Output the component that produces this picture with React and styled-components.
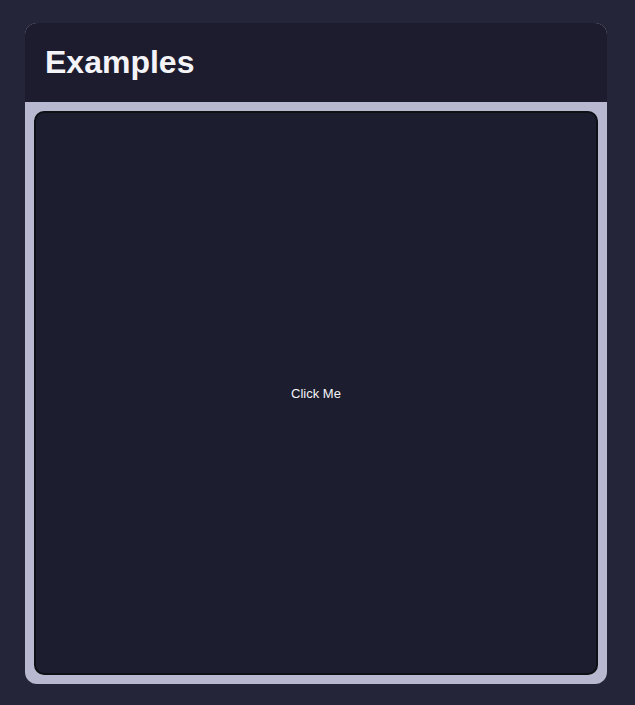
import React from "react";
import styled, { createGlobalStyle } from "styled-components";

const Global = createGlobalStyle`
  html, body { margin: 0; padding: 0; background: #25253a; }
  body { font-family: "Liberation Sans", Arial, sans-serif; }
`;

const Page = styled.div`
  padding: 23px 28px 21px 25px;
  min-height: 705px;
  box-sizing: border-box;
`;

const Card = styled.section`
  width: 582px;
  height: 661px;
  border-radius: 12px;
  overflow: hidden;
  display: flex;
  flex-direction: column;
  background: #b8b9d0;
`;

const Header = styled.header`
  height: 79px;
  flex: none;
  background: #1c1c2e;
  display: flex;
  align-items: center;
  padding: 0 20px;
  box-sizing: border-box;
`;

const Title = styled.h1`
  margin: 0;
  font-size: 32px;
  font-weight: 700;
  color: #f4f4f8;
`;

const Body = styled.div`
  flex: 1;
  padding: 9px;
  display: flex;
`;

const Stage = styled.div`
  flex: 1;
  background: #1c1d2e;
  border: 2px solid #0f0f16;
  border-radius: 10px;
  display: flex;
  align-items: center;
  justify-content: center;
`;

const Button = styled.button`
  background: none;
  border: none;
  color: #f4f4f8;
  font-family: "Liberation Sans", Arial, sans-serif;
  font-size: 13px;
  cursor: pointer;
  padding: 0;
`;

export default function App() {
  return (
    <>
      <Global />
      <Page>
        <Card>
          <Header>
            <Title>Examples</Title>
          </Header>
          <Body>
            <Stage>
              <Button>Click Me</Button>
            </Stage>
          </Body>
        </Card>
      </Page>
    </>
  );
}
